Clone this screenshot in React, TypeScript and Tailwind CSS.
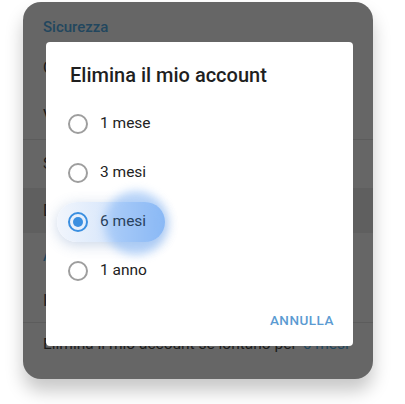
import React from "react";

const options = [
  { label: "1 mese", selected: false },
  { label: "3 mesi", selected: false },
  { label: "6 mesi", selected: true },
  { label: "1 anno", selected: false },
];

export default function App() {
  return (
    <div className="w-[405px] h-[404px] bg-white pt-[2px] pl-[23px]" style={{ fontFamily: "Roboto, 'Liberation Sans', sans-serif" }}>
      <div className="relative w-[350px] h-[377px] rounded-[18px] bg-[#666666] overflow-hidden shadow-[0_12px_18px_rgba(0,0,0,0.22)]">
        {/* dimmed settings list behind the dialog */}
        <div className="flex flex-col text-[#1c1c1c]">
          <div className="h-[42px] flex items-center px-[20px] pt-[8px] text-[15px] font-medium text-[#22465e]">Sicurezza</div>
          <div className="h-[48px] flex items-center px-[20px] text-[16px]">Codice d'accesso</div>
          <div className="h-[48px] flex items-center justify-between px-[20px] text-[16px] border-b border-[#5c5c5c]">
            <span>Verifica in due passaggi</span>
            <span className="text-[#22465e]">No</span>
          </div>
          <div className="h-[48px] flex items-center px-[20px] text-[16px]">Sessioni attive</div>
          <div className="h-[45px] flex items-center px-[20px] text-[16px] bg-[#5f5f5f]">Dispositivi</div>
          <div className="h-[46px] flex items-center px-[20px] text-[14px] font-medium text-[#22465e]">Account</div>
          <div className="h-[44px] flex items-center px-[20px] text-[16px] border-b border-[#5c5c5c]">Il mio account</div>
          <div className="h-[44px] flex items-center px-[20px] text-[15.5px] whitespace-nowrap">
            Elimina il mio account se lontano per
            <span className="ml-[6px] text-[#22465e]">6 mesi</span>
          </div>
        </div>

        {/* dialog */}
        <div className="absolute left-[23px] top-[40px] w-[307px] h-[304px] bg-white rounded-[4px] flex flex-col">
          <div className="h-[57px] pl-[24px] pt-[21px] text-[20px] leading-[24px] font-medium text-[#1f1f1f]">
            Elimina il mio account
          </div>
          <div className="relative flex flex-col">
            {/* highlight of the pressed option */}
            <div className="absolute left-[11px] top-[103px] w-[108px] h-[40px] rounded-full bg-gradient-to-r from-[#f1f5fc] via-[#d8e7fb] to-[#86b6f4] shadow-[0_3px_14px_rgba(80,120,180,0.3)]" />
            <div className="absolute left-[58px] top-[92px] w-[64px] h-[64px] rounded-full bg-[#8cbaf6] opacity-60 blur-[5px]" />
            {options.map((o) => (
              <div key={o.label} className="relative h-[49px] flex items-center pl-[22px]">
                {o.selected ? (
                  <span className="w-[20px] h-[20px] rounded-full border-2 border-[#3b8fe0] flex items-center justify-center">
                    <span className="w-[10px] h-[10px] rounded-full bg-[#3b8fe0]" />
                  </span>
                ) : (
                  <span className="w-[20px] h-[20px] rounded-full border-2 border-[#9e9e9e]" />
                )}
                <span className={`ml-[12px] text-[15.5px] ${o.selected ? "text-[#29415c]" : "text-[#222222]"}`}>{o.label}</span>
              </div>
            ))}
          </div>
          <div className="flex-1 flex items-center justify-end pr-[19px]">
            <span className="text-[13.5px] font-medium tracking-[0.5px] text-[#5b9bd2]">ANNULLA</span>
          </div>
        </div>
      </div>
    </div>
  );
}
